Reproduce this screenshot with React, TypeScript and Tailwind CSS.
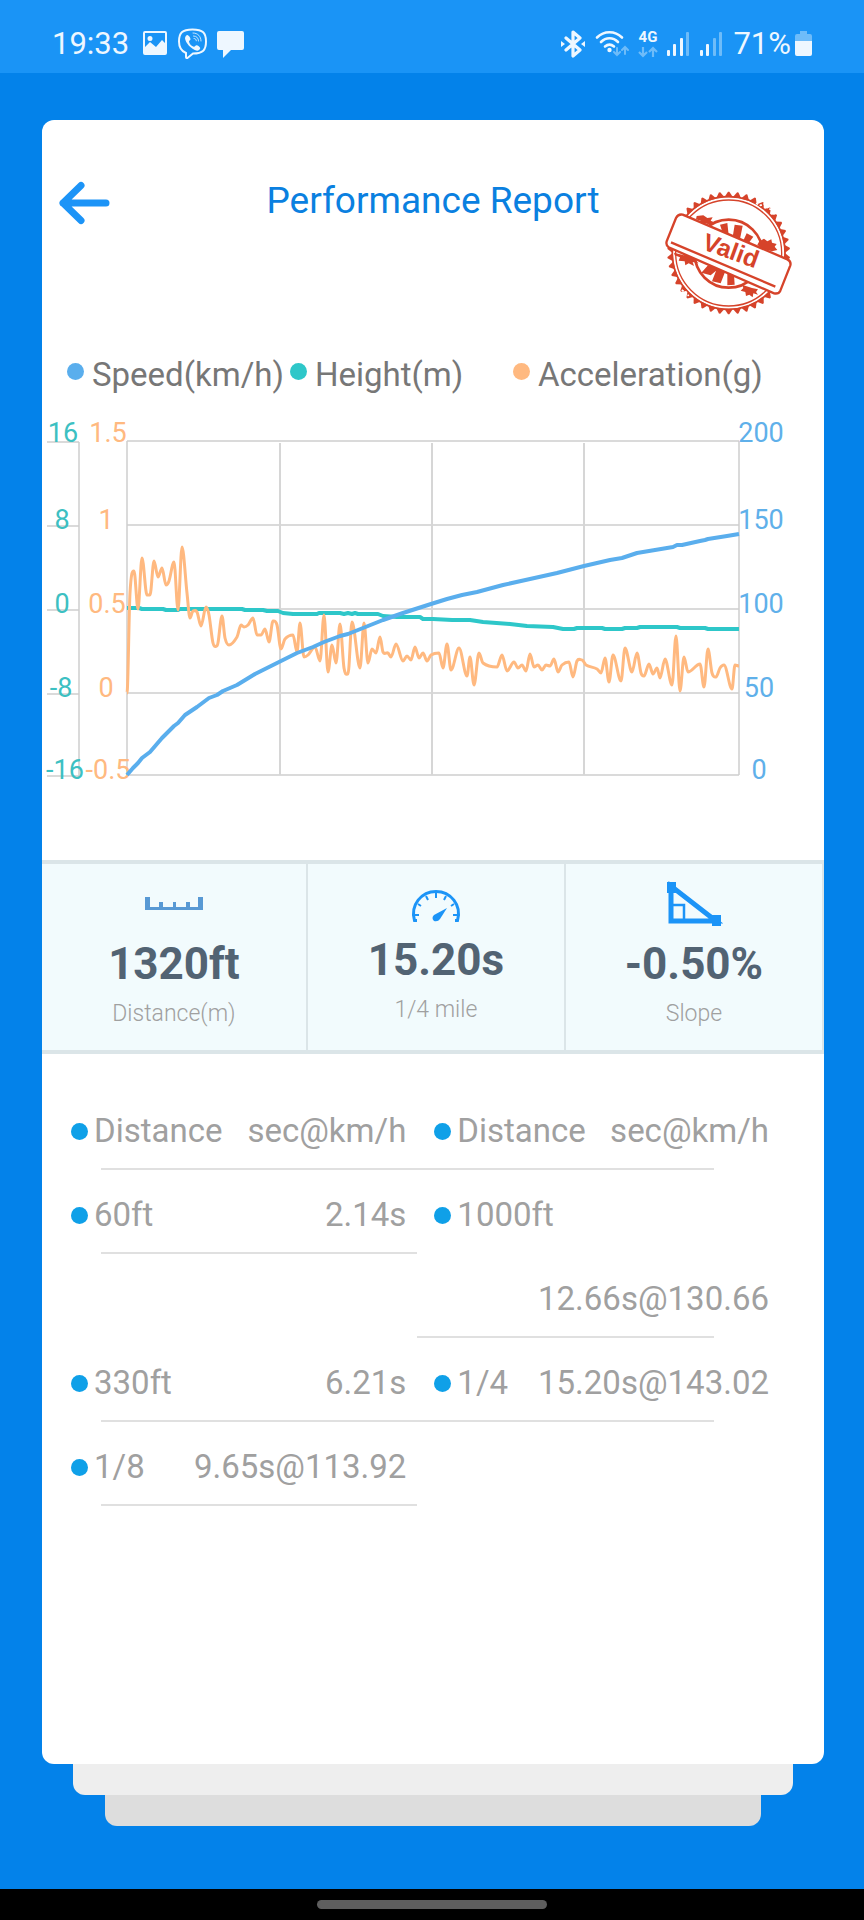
import React from 'react';

type Point = [number, number];

interface Split {
	label: string;
	value: string;
}

interface SplitRow {
	left?: Split;
	right?: Split;
	lineLeft: boolean;
	lineRight: boolean;
}

const LEGEND = [
	{ label: 'Speed(km/h)', dot: 'bg-[#5aaeed]' },
	{ label: 'Height(m)', dot: 'bg-[#2ec7c9]' },
	{ label: 'Acceleration(g)', dot: 'bg-[#ffb980]' },
];

// plot area is 612 x 334, origin in the top left corner
const GRID_X = [153, 305, 457];
const GRID_Y = [0, 84, 168, 252, 334];
const TICKS = [
	{ y: 1, height: '16', heightX: -64, accel: '1.5', accelX: -19, speed: '200', speedX: 634 },
	{ y: 88, height: '8', heightX: -65, accel: '1', accelX: -21, speed: '150', speedX: 634 },
	{ y: 172, height: '0', heightX: -65, accel: '0.5', accelX: -20, speed: '100', speedX: 634 },
	{ y: 256, height: '-8', heightX: -66, accel: '0', accelX: -21, speed: '50', speedX: 632 },
	{ y: 338, height: '-16', heightX: -62, accel: '-0.5', accelX: -19, speed: '0', speedX: 632 },
];

const SPEED: Point[] = [
	[0, 334], [6, 327], [11, 322], [15, 317], [23, 311], [35, 297], [47, 285], [51, 282], [58, 274], [70, 266],
	[82, 257], [90, 254], [96, 250], [110, 244], [128, 233], [150, 222], [170, 212], [186, 206], [197, 201], [213, 195],
	[221, 193], [236, 187], [256, 179], [276, 172], [304, 163], [320, 158], [335, 154], [350, 151], [376, 144], [403, 138],
	[430, 132], [457, 125], [483, 119], [495, 117], [510, 112], [546, 106], [550, 104], [555, 104], [573, 100], [578, 99],
	[581, 98], [600, 95], [606, 94], [612, 93],
];

const HEIGHT: Point[] = [
	[0, 167], [12, 167], [15, 168], [36, 168], [39, 169], [51, 169], [53, 168], [115, 168], [118, 169], [136, 169],
	[140, 170], [151, 170], [156, 172], [166, 173], [190, 173], [192, 172], [213, 172], [217, 173], [221, 172], [225, 173],
	[228, 172], [231, 173], [251, 173], [256, 175], [270, 176], [293, 176], [296, 178], [306, 178], [325, 179], [343, 179],
	[356, 181], [383, 183], [400, 185], [426, 186], [436, 188], [447, 188], [450, 187], [475, 187], [478, 188], [495, 188],
	[498, 187], [510, 187], [513, 186], [550, 186], [553, 187], [578, 187], [581, 188], [612, 188],
];

const ACCEL: Point[] = [
	[0, 252], [3, 152], [7, 130], [11, 168], [15, 117], [20, 154], [23, 154], [27, 120], [31, 136], [35, 127],
	[39, 144], [42, 140], [47, 121], [51, 169], [55, 106], [60, 152], [63, 177], [66, 170], [70, 171], [74, 185],
	[79, 166], [82, 174], [86, 202], [90, 205], [95, 175], [98, 197], [102, 204], [110, 196], [114, 184], [117, 186],
	[121, 184], [126, 177], [130, 194], [134, 194], [138, 188], [142, 201], [146, 180], [150, 184], [154, 208], [158, 198],
	[166, 194], [170, 211], [173, 182], [177, 216], [181, 214], [188, 206], [193, 220], [197, 174], [201, 231], [205, 204],
	[209, 222], [213, 183], [217, 227], [221, 233], [225, 181], [233, 227], [237, 182], [241, 222], [245, 208], [249, 212],
	[253, 196], [256, 211], [261, 212], [264, 216], [269, 203], [276, 220], [280, 215], [284, 219], [288, 206], [292, 217],
	[296, 212], [300, 220], [304, 214], [312, 212], [316, 227], [320, 203], [324, 229], [332, 207], [340, 235], [343, 216],
	[347, 244], [352, 212], [356, 222], [370, 226], [375, 214], [380, 230], [387, 221], [391, 227], [395, 224], [399, 230],
	[403, 213], [407, 226], [411, 224], [415, 229], [419, 224], [423, 225], [427, 218], [431, 231], [435, 224], [442, 221],
	[446, 236], [450, 220], [455, 219], [459, 224], [470, 228], [474, 232], [478, 217], [482, 241], [486, 214], [494, 240],
	[498, 207], [505, 231], [510, 212], [514, 232], [517, 235], [522, 223], [526, 233], [530, 227], [533, 237], [538, 218],
	[545, 244], [549, 195], [553, 250], [557, 216], [561, 231], [573, 223], [577, 246], [581, 208], [585, 232], [589, 236],
	[593, 227], [597, 224], [605, 248], [608, 224], [612, 225],
];

const SPLITS: SplitRow[] = [
	{ left: { label: '60ft', value: '2.14s' }, right: { label: '1000ft', value: '' }, lineLeft: true, lineRight: false },
	{ right: { label: '', value: '12.66s@130.66' }, lineLeft: false, lineRight: true },
	{ left: { label: '330ft', value: '6.21s' }, right: { label: '1/4', value: '15.20s@143.02' }, lineLeft: true, lineRight: true },
	{ left: { label: '1/8', value: '9.65s@113.92' }, lineLeft: true, lineRight: false },
];

// curve through all points, flat at the peaks
const smoothPath = (points: Point[]) => {
	const slope = (i: number) => {
		if (i === 0 || i === points.length - 1) return 0;
		const [x0, y0] = points[i - 1];
		const [, y1] = points[i];
		const [x2, y2] = points[i + 1];
		return (y1 - y0) * (y2 - y1) <= 0 ? 0 : (y2 - y0) / (x2 - x0);
	};

	return points
		.map(([x, y], i) => {
			if (i === 0) return `M${x} ${y}`;
			const [px, py] = points[i - 1];
			const dx = (x - px) / 3;
			return `C${px + dx} ${py + slope(i - 1) * dx} ${x - dx} ${y - slope(i) * dx} ${x} ${y}`;
		})
		.join('');
};

const linePath = (points: Point[]) => 'M' + points.map((p) => p.join(' ')).join('L');

const SignalIcon = ({ level }: { level: number }) => (
	<svg width="23" height="28" viewBox="0 0 23 28" fill="#eef7ff">
		<rect x="0" y="20" width="3" height="6" rx="1" />
		<rect x="6" y="14" width="3" height="12" rx="1" />
		<rect x="13" y="8" width="3" height="18" rx="1" opacity={level > 2 ? 1 : 0.4} />
		<rect x="19" y="2" width="3" height="24" rx="1" opacity="0.4" />
	</svg>
);

const StatusBar = () => (
	<header className="flex h-[73px] items-center justify-between bg-[#1a94f6] pt-3.5 pr-[52px] pl-[52px] text-[31px] leading-9 text-[#eef7ff]">
		<div className="flex items-center gap-2.5">
			<span className="pr-[3px]">19:33</span>
			<svg width="26" height="28" viewBox="0 0 26 28">
				<path
					fill="#eef7ff"
					fillRule="evenodd"
					d="M3 1h20a2 2 0 0 1 2 2v20a2 2 0 0 1-2 2H3a2 2 0 0 1-2-2V3a2 2 0 0 1 2-2zM3 3v14l5-5 6 5 6-7 3 3V3zM8 6a2.500 2.500 0 1 1 0 5a2.500 2.500 0 0 1 0-5z"
				/>
			</svg>
			<svg width="29" height="31" viewBox="0 0 29 31" fill="none" stroke="#eef7ff" strokeLinecap="round">
				<path strokeWidth="2" d="M8 25C3 23 1 20 1 13.500C1 5 4 1.500 14.500 1.500S28 5 28 13.500S25 25.500 15 25.500L9.500 30C8.500 30.500 8 30 8 29z" />
				<path
					fill="#eef7ff"
					stroke="none"
					d="M9.500 7c1.500.5 3 3 3 4.200c0 1.200-1.800 1.400-1.500 2.600c.6 2.500 2.500 4.200 4.800 5c1.200.3 1.600-1.700 2.800-1.500c1.300.2 3.400 1.700 3.600 2.700c.2 1.300-1.800 3-3.200 2.800C13 21 7.500 15 7 10.200C7 8.800 8.500 6.800 9.500 7z"
				/>
				<path strokeWidth="1" opacity="0.8" d="M15 5c5 0 8 3.500 8 8M15.500 8c3.200 0 5 2 5 5M16 10.500c1.500 0 2.300.8 2.300 2.300" />
			</svg>
			<svg width="27" height="28" viewBox="0 0 27 28" fill="#eef7ff">
				<path d="M2 1h23a2 2 0 0 1 2 2v15a2 2 0 0 1-2 2H14l-8 8v-8H2a2 2 0 0 1-2-2V3a2 2 0 0 1 2-2z" />
			</svg>
		</div>
		<div className="flex items-center gap-2.5">
			<svg width="24" height="28" viewBox="0 0 24 28" fill="none" stroke="#eef7ff" strokeWidth="3.200" strokeLinejoin="round" strokeLinecap="round">
				<path d="M5 8l14 12-7 6V2l7 6L5 20" />
				<path d="M0 11l4 3-4 3zM24 11l-4 3 4 3z" fill="#eef7ff" stroke="none" />
			</svg>
			<svg width="34" height="28" viewBox="0 0 34 28" fill="none" stroke="#eef7ff" strokeWidth="2.600" strokeLinecap="round">
				<path d="M2 7.500C9 .5 20 .5 27 7.500M6 12c5-5 12-5 17 0M10 16.500c3-2.500 6-2.500 9 0" />
				<circle cx="14.500" cy="20" r="2.200" fill="#eef7ff" stroke="none" />
				<path d="M22 18v7m-3-3l3 3 3-3M30 24v-7m-3 3l3-3 3 3" strokeWidth="2" opacity="0.4" />
			</svg>
			<svg width="22" height="36" viewBox="-1 -4 22 36" fill="none" stroke="#eef7ff" strokeWidth="2.200" className="-mx-0.5">
				<text x="10" y="12" textAnchor="middle" fontSize="15" fontWeight="700" fill="#eef7ff" stroke="none">
					4G
				</text>
				<path d="M5 17v9m-4-4l4 4 4-4M15 27v-9m-4 4l4-4 4 4" opacity="0.4" />
			</svg>
			<SignalIcon level={3} />
			<SignalIcon level={2} />
			<span>71%</span>
			<svg width="17" height="28" viewBox="0 0 17 28" fill="#eef7ff" className="-ml-1.5">
				<path d="M5 1h7v3h3a2 2 0 0 1 2 2v5H0V6a2 2 0 0 1 2-2h3z" opacity="0.4" />
				<path d="M0 11h17v13a2 2 0 0 1-2 2H2a2 2 0 0 1-2-2z" />
			</svg>
		</div>
	</header>
);

const TEETH = Array.from({ length: 42 }, (_, i) => (i * 360) / 42);

const ValidStamp = () => (
	<svg width="127" height="124" viewBox="107 63 381 372" className="text-[#d6432a]" role="img" aria-label="Valid">
		<g fill="currentColor">
			{TEETH.map((angle) => (
				<path key={angle} d="M285 82L296 65h4L311 82z" transform={`rotate(${angle} 298 249)`} />
			))}
		</g>
		<g fill="none" stroke="currentColor">
			<circle cx="298" cy="249" r="169" strokeWidth="5" />
			<circle cx="298" cy="249" r="159" strokeWidth="4" />
			<circle cx="298" cy="251" r="102" strokeWidth="8" />
		</g>
		{/* worn spots of the ring */}
		<path d="M380 100l14 6 10-4 14 14 12 4 4 14M150 350l10 12 8 2 10 14" fill="none" stroke="#fff" strokeWidth="5" strokeDasharray="7 5" />
		<g fill="currentColor">
			<path d="M272 164l22-5 4 36-14 6zM316 164l24 3-8 40-22-6zM352 190l20 10-16 22-16-6zM236 286l34 8-26 22-28-8zM262 298l26 6-14 36-26-6zM294 308l20 6 2 30-22 2z" />
			<path d="M202 138l20-2 12 8 16-2-6 10 14 6-10 8-20-6-16 2 2-10-14-4zM390 214l14-8 10 8 12-6 2 10 14 4-6 8 8 10-16 4-30-8-14-12z" />
			<path d="M134 248l30 8 8-4 14 10 16-2-4 12 10 8-18-4 4 12-16-8-10 6-2-12-18-2 4-10-16-6zM338 344l30 10 18 4-6 8 6 8-14-4-2 12-10-8-10 4-2-12-14-4 8-8z" />
		</g>
		<path d="M160 134L474 268Q486 274 483 286L453 362Q448 373 434 370L118 232Q109 226 112 214L140 144Q147 131 160 134z" fill="#fff" stroke="currentColor" strokeWidth="7" />
		<path d="M125 217L438 350" stroke="currentColor" strokeWidth="7" />
		<text transform="translate(215 236) rotate(20)" fontSize="74" fill="currentColor" className="font-['Liberation_Sans',sans-serif] font-bold">
			Valid
		</text>
	</svg>
);

const ReportChart = () => (
	<svg viewBox="-85 -42 782 389" className="w-full" role="img" aria-label="Speed, height and acceleration over the run">
		<g stroke="#cecece" strokeWidth="1.500" fill="none">
			{GRID_Y.map((y) => (
				<path key={y} d={`M0 ${y}H612M-80 ${y + 1}H-48`} />
			))}
			<path d="M0 0V334M612 0V334M-48 1V336" />
			{GRID_X.map((x) => (
				<path key={x} d={`M${x} 2V334`} stroke="#d6d6d6" strokeWidth="2" />
			))}
		</g>
		<g fontSize="27" textAnchor="middle">
			{TICKS.map((tick) => (
				<React.Fragment key={tick.y}>
					<text x={tick.heightX} y={tick.y} fill="#3cc0c2">
						{tick.height}
					</text>
					<text x={tick.accelX} y={tick.y} fill="#ffb980">
						{tick.accel}
					</text>
					<text x={tick.speedX} y={tick.y} fill="#5fb0ea">
						{tick.speed}
					</text>
				</React.Fragment>
			))}
		</g>
		<g fill="none" strokeLinejoin="round">
			<path d={linePath(HEIGHT)} stroke="#2ec7c9" strokeWidth="4" />
			<path d={smoothPath(ACCEL)} stroke="#ffb980" strokeWidth="3" />
			<path d={linePath(SPEED)} stroke="#5aaeed" strokeWidth="4" />
		</g>
	</svg>
);

const Stat = ({ icon, value, label }: { icon: React.ReactNode; value: string; label: string }) => (
	<div className="flex flex-1 flex-col items-center border-r-2 border-[#dbe5e8] pt-3 pb-5">
		{icon}
		<div className="mt-3 text-[44px] leading-[52px] font-bold text-[#526373]">{value}</div>
		<div className="mt-2 text-[23px] leading-8 font-light text-[#a0a0a0]">{label}</div>
	</div>
);

const Stats = () => (
	<section className="mt-18 flex border-y-4 border-[#dbe5e8] bg-[#f2fbfd]">
		<div className="flex w-[34%]">
			<Stat
				value="1320ft"
				label="Distance(m)"
				icon={
					<svg width="60" height="50" viewBox="0 0 60 50" fill="#5899d4">
						<path d="M1 21h5v10h9v-5h4v5h10v-5h3v5h10v-5h4v5h8V21h5v13H1z" />
					</svg>
				}
			/>
		</div>
		<Stat
			value="15.20s"
			label="1/4 mile"
			icon={
				<svg width="60" height="46" viewBox="0 0 60 46" fill="none" stroke="#1c94f7">
					<path d="M11 44.500H8.500C4 29 15.500 15.500 30 15.500S56 29 51.500 44.500H49" strokeWidth="3" />
					<path d="M9 39h4M12 28l3 2M20 20l2 4M30 17v5M40 20l-2 4M48 28l-3 2M51 39h-4" strokeWidth="2" />
					<path d="M41 32L34 43Q32 46 28 45Q25 42 28 39z" fill="#1c94f7" stroke="none" />
				</svg>
			}
		/>
		<Stat
			value="-0.50%"
			label="Slope"
			icon={
				<svg width="60" height="50" viewBox="0 0 60 50" fill="none" stroke="#1c94f7">
					<path d="M7 10V45H52z" strokeWidth="5" />
					<path d="M9 29h11v14" strokeWidth="2.500" />
					<path d="M3 6h9v11H3zM48 39h9v11h-9z" fill="#1c94f7" stroke="none" />
				</svg>
			}
		/>
	</section>
);

const Line = ({ show, className = '' }: { show: boolean; className?: string }) => (
	<div className={`h-0.5 ${show ? 'bg-[#e0e0e0]' : ''} ${className}`} />
);

const Label = ({ text, className }: { text?: string; className: string }) => (
	<div className={`flex h-[82px] items-center gap-1.5 pt-2 whitespace-nowrap ${className}`}>
		{text && (
			<>
				<span className="size-[17px] shrink-0 rounded-full bg-[#0fa0e8]" />
				<span>{text}</span>
			</>
		)}
	</div>
);

const Value = ({ text, className }: { text?: string; className: string }) => (
	<div className={`flex h-[82px] items-center justify-end pt-2 whitespace-nowrap ${className}`}>{text}</div>
);

const SplitTable = () => (
	<table className="mt-8 w-full table-fixed border-collapse text-left text-[33px] leading-10 text-[#a0a0a0]">
		<colgroup>
			<col className="w-[19%]" />
			<col className="w-[29%]" />
			<col className="w-[15%]" />
			<col className="w-[37%]" />
		</colgroup>
		<thead>
			<tr>
				<th scope="col" className="p-0 font-normal">
					<Label text="Distance" className="pl-[29px]" />
					<Line show className="ml-[59px]" />
				</th>
				<th scope="col" className="p-0 font-normal">
					<Value text="sec@km/h" className="pr-[11px]" />
					<Line show />
				</th>
				<th scope="col" className="p-0 font-normal">
					<Label text="Distance" className="pl-[17px]" />
					<Line show />
				</th>
				<th scope="col" className="p-0 font-normal">
					<Value text="sec@km/h" className="pr-[55px]" />
					<Line show className="mr-[110px]" />
				</th>
			</tr>
		</thead>
		<tbody>
			{SPLITS.map(({ left, right, lineLeft, lineRight }, i) => (
				<tr key={i}>
					<td className="p-0">
						<Label text={left?.label} className="pl-[29px]" />
						<Line show={lineLeft} className="ml-[59px]" />
					</td>
					<td className="p-0">
						<Value text={left?.value} className="pr-[11px]" />
						<Line show={lineLeft} />
					</td>
					<td className="p-0">
						<Label text={right?.label} className="pl-[17px]" />
						<Line show={lineRight} />
					</td>
					<td className="p-0">
						<Value text={right?.value} className="pr-[55px]" />
						<Line show={lineRight} className="mr-[110px]" />
					</td>
				</tr>
			))}
		</tbody>
	</table>
);

const App = () => {
	return (
		<div className="flex min-h-screen flex-col bg-[#0382ea] font-[Roboto,sans-serif]">
			<StatusBar />
			<main className="flex flex-1 flex-col pt-[47px] pr-10 pb-[63px] pl-[42px]">
				<div className="flex-1 rounded-xl bg-white">
					<div className="flex items-start justify-between pt-14">
						<div className="w-40 pl-4">
							<button type="button" aria-label="Back" className="flex h-[54px] items-center">
								<svg width="54" height="44" viewBox="0 0 54 44" fill="none" stroke="#1c94f7" strokeWidth="7" strokeLinecap="round" strokeLinejoin="round">
									<path d="M48 22H5M23 4.500L5 22l18 17.500" />
								</svg>
							</button>
						</div>
						<h1 className="text-[37px] leading-[50px] whitespace-nowrap text-[#0a80e0]">Performance Report</h1>
						<div className="flex w-40 justify-end pt-[15px] pr-8">
							<ValidStamp />
						</div>
					</div>
					<ul className="mt-9 grid grid-cols-3 pr-[88px] pl-[25px] text-[33px] leading-[48px] text-[#777777]">
						{LEGEND.map(({ label, dot }) => (
							<li key={label} className="flex items-center gap-2 whitespace-nowrap">
								<span className={`mb-2 size-[17px] shrink-0 rounded-full ${dot}`} />
								{label}
							</li>
						))}
					</ul>
					<ReportChart />
					<Stats />
					<SplitTable />
				</div>
				<div className="mx-[31px] h-[31px] rounded-b-xl bg-[#eeeeee]" />
				<div className="mx-[63px] h-[31px] rounded-b-xl bg-[#dddddd]" />
			</main>
			<footer className="flex h-[31px] items-center justify-center bg-black">
				<div className="h-[9px] w-[230px] rounded-full bg-[#5e5e5e]" />
			</footer>
		</div>
	);
};

export default App;
